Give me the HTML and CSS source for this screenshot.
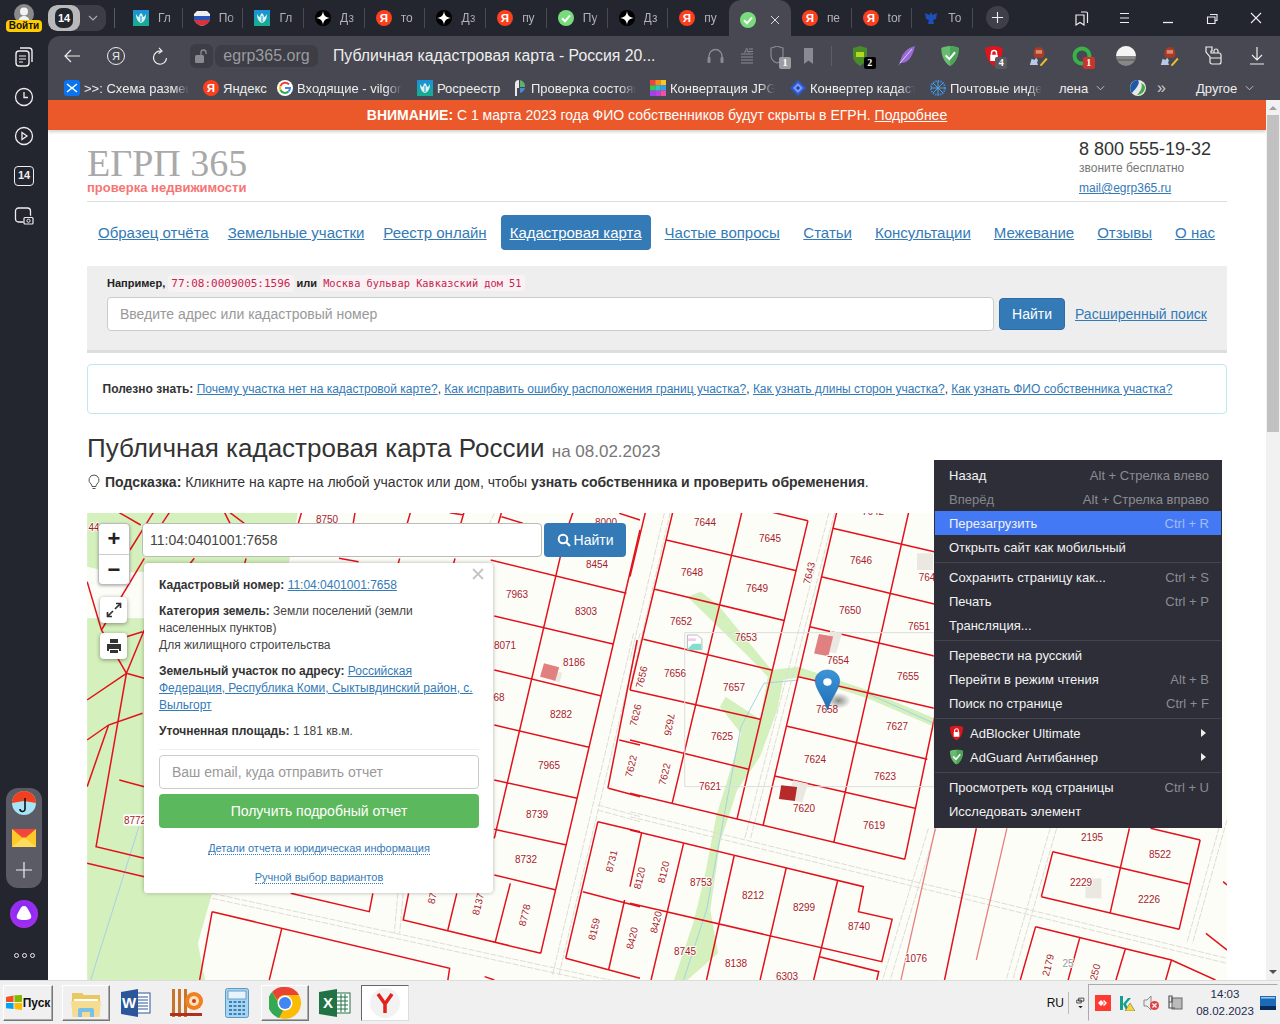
FILE: index.html
```html
<!DOCTYPE html>
<html lang="ru">
<head>
<meta charset="utf-8">
<title>Публичная кадастровая карта - Россия</title>
<link rel="stylesheet" href="styles.css">
</head>
<body>
<svg class="defs" width="0" height="0" aria-hidden="true">
  <defs>
    <linearGradient id="rosgrad" x1="0" y1="0" x2="0" y2="1"><stop offset="0" stop-color="#1d8fe0"/><stop offset="1" stop-color="#16b08a"/></linearGradient>
    <radialGradient id="alice" cx=".5" cy=".4" r=".7"><stop offset="0" stop-color="#7b2cf5"/><stop offset="1" stop-color="#b02cf0"/></radialGradient>
    <linearGradient id="pin" x1="0" y1="0" x2="0" y2="1"><stop offset="0" stop-color="#3d94d9"/><stop offset="1" stop-color="#1f6fb4"/></linearGradient>
    <radialGradient id="pinshadow"><stop offset="0" stop-color="#000" stop-opacity=".45"/><stop offset="1" stop-color="#000" stop-opacity="0"/></radialGradient>
    <symbol id="i-ros" viewBox="0 0 16 16"><rect width="16" height="16" fill="url(#rosgrad)"/><path d="M3 4c0 5 2 8 5 9 3-1 5-4 5-9-1 2-2 3-3 3 0-2-1-3-2-4-1 1-2 2-2 4-1 0-2-1-3-3z" fill="#d8f4f0"/><path d="M8 6v6" stroke="#1d8fe0" stroke-width="1"/></symbol>
    <symbol id="i-ya" viewBox="0 0 16 16"><circle cx="8" cy="8" r="8" fill="#fc3f1d"/><text x="8" y="12.4" text-anchor="middle" class="ya-letter">Я</text></symbol>
    <symbol id="i-dz" viewBox="0 0 16 16"><circle cx="8" cy="8" r="8" fill="#000"/><path d="M8 .8C8.400 5.500 10.500 7.600 15.200 8 10.500 8.400 8.400 10.500 8 15.200 7.600 10.500 5.500 8.400.8 8 5.500 7.600 7.600 5.500 8 .8z" fill="#fff"/></symbol>
    <symbol id="i-ok" viewBox="0 0 16 16"><circle cx="8" cy="8" r="8" fill="#79dc7c"/><path d="M4 8.300l3 3 5-6" fill="none" stroke="#fff" stroke-width="2"/></symbol>
    <symbol id="i-ru" viewBox="0 0 16 16"><path d="M3 1h10l3 3v4c0 4-4 7-8 8-4-1-8-4-8-8V4z" fill="#eee"/><path d="M0 6h16v4H0z" fill="#2a56b8"/><path d="M0 10h16c-1 3-4 5-8 6-4-1-7-3-8-6z" fill="#d8323c"/></symbol>
    <symbol id="i-eagle" viewBox="0 0 16 16"><path d="M8 2l1.500 3L14 3l-1 6-3 1 1 4H5l1-4-3-1-1-6 4.500 2z" fill="#1d4fb8"/></symbol>
    <symbol id="i-adg" viewBox="0 0 16 16"><path d="M8 0c3 0 5.500.8 7 1.600C15 8 12.500 13.500 8 16 3.500 13.500 1 8 1 1.600 2.500.8 5 0 8 0z" fill="#68bc71"/><path d="M8 0c3 0 5.500.8 7 1.600C15 8 12.500 13.500 8 16z" fill="#4da458"/><path d="M4.500 7.500l3 3 4.500-5.500" fill="none" stroke="#fff" stroke-width="1.600"/></symbol>
    <symbol id="i-adb" viewBox="0 0 16 16"><path d="M8 0c2.500 0 5 .8 7 1.800C15 8 12.500 13.500 8 16 3.500 13.500 1 8 1 1.800 3 .8 5.500 0 8 0z" fill="#e0141c"/><rect x="5" y="7" width="6" height="5" fill="#fff"/><path d="M6 7V5.500a2 2 0 0 1 4 0V7" fill="none" stroke="#fff" stroke-width="1.200"/></symbol>
    <symbol id="i-hat" viewBox="0 0 22 22"><path d="M6 9c0-5 2-8 6-8s6 3 6 8c0 2-1 3-2 4H8c-1-1-2-2-2-4z" fill="#a83a28"/><rect x="8.500" y="4.500" width="7" height="4" fill="#d98a70"/><path d="M2 21l2-7 3 1.500L9 13l2 3-1 2 1 3z" fill="#b8c8e8"/><path d="M13 21l7-8 1.500 1.500-7 8z" fill="#e8c030"/></symbol>
  </defs>
</svg>

<div class="screen">
  <header class="tabbar">
    <div class="account">
      <svg class="avatar" viewBox="0 0 20 20"><circle cx="10" cy="10" r="10" fill="#8a8a8a"/><circle cx="10" cy="7.500" r="4" fill="#f2f2f2"/><path d="M4 20c0-6 3-8 6-8s6 2 6 8z" fill="#f2f2f2"/></svg>
      <span class="login">Войти</span>
    </div>
    <div class="counter">
      <span class="counter-num"><span class="shield-num">14</span></span>
      <span class="counter-arrow"><svg width="10" height="6" viewBox="0 0 10 6"><path d="M1 1l4 4 4-4" fill="none" stroke="#aaa" stroke-width="1.200"/></svg></span>
    </div>
    <div class="tabs">
      <div class="tab"><svg class="ticon"><use href="#i-ros"/></svg><span class="tlabel">Гл</span></div>
      <div class="tab"><svg class="ticon"><use href="#i-ru"/></svg><span class="tlabel">По</span></div>
      <div class="tab"><svg class="ticon"><use href="#i-ros"/></svg><span class="tlabel">Гл</span></div>
      <div class="tab"><svg class="ticon"><use href="#i-dz"/></svg><span class="tlabel">Дз</span></div>
      <div class="tab"><svg class="ticon"><use href="#i-ya"/></svg><span class="tlabel">то</span></div>
      <div class="tab"><svg class="ticon"><use href="#i-dz"/></svg><span class="tlabel">Дз</span></div>
      <div class="tab"><svg class="ticon"><use href="#i-ya"/></svg><span class="tlabel">пу</span></div>
      <div class="tab"><svg class="ticon"><use href="#i-ok"/></svg><span class="tlabel">Пу</span></div>
      <div class="tab"><svg class="ticon"><use href="#i-dz"/></svg><span class="tlabel">Дз</span></div>
      <div class="tab tab-last"><svg class="ticon"><use href="#i-ya"/></svg><span class="tlabel">пу</span></div>
      <div class="tab tab-active"><svg class="ticon"><use href="#i-ok"/></svg><svg class="tclose" viewBox="0 0 10 10"><path d="M1 1l8 8M9 1l-8 8" stroke="#ddd" stroke-width="1"/></svg></div>
      <div class="tab tab-after"><svg class="ticon"><use href="#i-ya"/></svg><span class="tlabel">пе</span></div>
      <div class="tab"><svg class="ticon"><use href="#i-ya"/></svg><span class="tlabel">tor</span></div>
      <div class="tab"><svg class="ticon"><use href="#i-eagle"/></svg><span class="tlabel">То</span></div>
    </div>
    <div class="newtab"><svg width="13" height="13" viewBox="0 0 14 14"><path d="M7 1v12M1 7h12" stroke="#eee" stroke-width="1.200"/></svg></div>
    <div class="winctl">
      <svg class="wslot" viewBox="0 0 44 36"><path d="M23 12h5a1.500 1.500 0 0 1 1.500 1.500V23M18 15h8v10l-4-2.500-4 2.500z" fill="none" stroke="#eee" stroke-width="1.200"/></svg>
      <svg class="wslot" viewBox="0 0 44 36"><path d="M18 13.500h9M18 18h9M18 22.500h9" stroke="#eee" stroke-width="1.100"/></svg>
      <svg class="wslot" viewBox="0 0 44 36"><path d="M17 22.500h10" stroke="#eee" stroke-width="1.300"/></svg>
      <svg class="wslot" viewBox="0 0 44 36"><path d="M20 14.500h7v6h-2M17.500 17h7.500v6.500h-7.500z" fill="none" stroke="#eee" stroke-width="1.100"/></svg>
      <svg class="wslot" viewBox="0 0 44 36"><path d="M17 13l10 10M27 13l-10 10" stroke="#eee" stroke-width="1.100"/></svg>
    </div>
  </header>

  <div class="main">
    <aside class="sidebar">
      <div class="side-top">
        <svg class="side-icon" viewBox="0 0 20 20"><path d="M6 1h9a3 3 0 0 1 3 3v11" fill="none" stroke="#eee" stroke-width="1.400"/><rect x="2" y="4" width="13" height="15" rx="3" fill="none" stroke="#eee" stroke-width="1.400"/><path d="M5 9h7M5 12h7M5 15h4" stroke="#eee"/></svg>
        <svg class="side-icon" viewBox="0 0 20 20"><circle cx="10" cy="10" r="8.500" fill="none" stroke="#eee" stroke-width="1.300"/><path d="M10 5v5.500h4" fill="none" stroke="#eee" stroke-width="1.300"/></svg>
        <svg class="side-icon" viewBox="0 0 20 20"><circle cx="10" cy="10" r="8.500" fill="none" stroke="#eee" stroke-width="1.300"/><path d="M8 6.500l5 3.500-5 3.500z" fill="none" stroke="#eee" stroke-width="1.300"/></svg>
        <span class="side-count">14</span>
        <svg class="side-icon" viewBox="0 0 20 20"><rect x="1.500" y="2" width="15" height="14" rx="3" fill="none" stroke="#eee" stroke-width="1.300"/><circle cx="14" cy="14" r="5" fill="#23252f"/><rect x="10" y="11.500" width="9" height="6.500" rx="1" fill="none" stroke="#eee" stroke-width="1.200"/><circle cx="14.500" cy="14.700" r="1.600" fill="none" stroke="#eee"/></svg>
      </div>
      <div class="side-bottom">
        <div class="side-group">
          <svg class="app-icon" viewBox="0 0 24 24"><circle cx="12" cy="12" r="12" fill="#a8e4f8"/><path d="M0 12A12 12 0 0 1 24 12L12 10z" fill="#f2401e"/><path d="M13 7v11a2.500 2.500 0 0 1-5 0" fill="none" stroke="#111" stroke-width="1.600"/></svg>
          <svg class="app-icon" viewBox="0 0 24 18"><rect width="24" height="18" fill="#ffc928"/><path d="M0 0h24L12 10z" fill="#f4453a"/><path d="M0 18l12-10 12 10z" fill="#ffdb5a"/></svg>
          <svg class="app-plus" viewBox="0 0 16 16"><path d="M8 0v16M0 8h16" stroke="#eee" stroke-width="1.200"/></svg>
        </div>
        <svg class="alice" viewBox="0 0 28 28"><circle cx="14" cy="14" r="14" fill="url(#alice)"/><path d="M14 6c2.500 0 3.500 2 5 5 1.500 3 3 5 2 7-1 1.500-4 2-7 2s-6-.5-7-2c-1-2 .5-4 2-7 1.500-3 2.500-5 5-5z" fill="#fff"/></svg>
        <div class="dots"><i></i><i></i><i></i></div>
      </div>
    </aside>

    <div class="browser">
      <div class="toolbar">
        <div class="nav-slot"><svg width="16" height="14" viewBox="0 0 16 14"><path d="M7 1L1 7l6 6M1 7h15" fill="none" stroke="#eee" stroke-width="1.200"/></svg></div>
        <div class="nav-slot"><span class="ya-round">Я</span></div>
        <div class="nav-slot"><svg width="16" height="18" viewBox="0 0 16 18"><path d="M9 4.300A6.500 6.500 0 1 0 14.500 11M7 .8l3 3.400-3.500 2.400" fill="none" stroke="#eee" stroke-width="1.200"/></svg></div>
        <div class="lock"><svg width="13" height="14" viewBox="0 0 13 14"><rect y="6" width="9" height="8" rx="1.500" fill="#8a8b92"/><path d="M6 6V3.500a2.500 2.500 0 0 1 5 0V5" fill="none" stroke="#8a8b92" stroke-width="1.300"/></svg></div>
        <span class="host">egrp365.org</span>
        <span class="page-title">Публичная кадастровая карта - Россия 20...</span>
        <div class="tool-small">
          <svg class="tslot" viewBox="0 0 31 20"><path d="M9 15V10a6.500 6.500 0 0 1 13 0v5" fill="none" stroke="#8a8b92" stroke-width="1.400"/><rect x="7.500" y="11" width="3" height="6" rx="1" fill="#8a8b92"/><rect x="20.500" y="11" width="3" height="6" rx="1" fill="#8a8b92"/></svg>
          <svg class="tslot" viewBox="0 0 31 20"><path d="M10 8h12M10 11h12M10 14h12M10 17h12" stroke="#8a8b92"/><text x="13" y="6.500" class="tool-letter">А</text><path d="M18 3h4M18 5.500h4" stroke="#8a8b92"/></svg>
          <div class="tslot-box"><svg class="tslot" viewBox="0 0 31 20"><path d="M15 0c2 1 4 1.500 6 2v7c0 4-3 7-6 8-3-1-6-4-6-8V2c2-.5 4-1 6-2z" fill="none" stroke="#8a8b92" stroke-width="1.200"/></svg><span class="tbadge tbadge-grey">1</span></div>
          <svg class="tslot" viewBox="0 0 31 20"><path d="M11 2h9v16l-4.500-3.500L11 18z" fill="#8a8b92"/></svg>
        </div>
        <span class="tool-sep"></span>
        <div class="ext">
          <div class="eslot"><svg class="eicon eicon-left" viewBox="0 0 20 20"><path d="M3 2l7-2 7 2v8c0 5-4 8-7 10-3-2-7-5-7-10z" fill="#4a8a28"/><path d="M6 6h8v5H6z" fill="#b4d820"/></svg><span class="tbadge tbadge-black">2</span></div>
          <div class="eslot"><svg class="eicon" viewBox="0 0 20 20"><path d="M18 0C10 2 5 7 3 16l-2 4 3-3c6 0 11-4 14-17z" fill="#9a6ad8"/><path d="M15 3L3 17" stroke="#e0d0f8"/></svg></div>
          <div class="eslot"><svg class="eicon" viewBox="0 0 16 16"><use href="#i-adg"/></svg></div>
          <div class="eslot"><svg class="eicon" viewBox="0 0 16 16"><use href="#i-adb"/></svg><span class="tbadge tbadge-dim">4</span></div>
          <div class="eslot"><svg class="eicon" viewBox="0 0 22 22"><use href="#i-hat"/></svg></div>
          <div class="eslot"><svg class="eicon" viewBox="0 0 20 20"><circle cx="10" cy="10" r="7.500" fill="none" stroke="#37b34a" stroke-width="4"/></svg><span class="tbadge tbadge-red">1</span></div>
          <div class="eslot"><svg class="eicon" viewBox="0 0 20 20"><circle cx="10" cy="10" r="10" fill="#888"/><path d="M0 10A10 10 0 0 1 20 10z" fill="#f4f4f4"/><path d="M1 14h18" stroke="#666" stroke-width="1.500"/></svg></div>
          <div class="eslot"><svg class="eicon" viewBox="0 0 22 22"><use href="#i-hat"/></svg></div>
          <div class="eslot"><svg class="eicon" viewBox="0 0 20 20"><path d="M3 1h6v4H8v2h8a2 2 0 0 1 2 2v7a2 2 0 0 1-2 2H9a2 2 0 0 1-2-2V11L3 6zM11 7V5a2 2 0 0 1 4 0v2M7 12h11" fill="none" stroke="#eee" stroke-width="1.200"/></svg></div>
          <div class="eslot"><svg class="eicon" viewBox="0 0 20 20"><path d="M10 1v13M5 9l5 5 5-5M3 18h14" fill="none" stroke="#eee" stroke-width="1.200"/></svg></div>
        </div>
      </div>

      <div class="bookmarks">
        <a class="bm bm-w139"><svg class="bicon" viewBox="0 0 16 16"><rect width="16" height="16" rx="3" fill="#0a74f0"/><path d="M3 4l5 4 5-4M3 12l5-4 5 4" fill="none" stroke="#fff" stroke-width="1.400"/></svg><span class="bfade">&gt;&gt;: Схема размещ</span></a>
        <a class="bm bm-w74"><svg class="bicon"><use href="#i-ya"/></svg><span>Яндекс</span></a>
        <a class="bm bm-w140"><svg class="bicon" viewBox="0 0 16 16"><circle cx="8" cy="8" r="8" fill="#fff"/><path d="M12 4.500A5 5 0 0 0 3.500 6" fill="none" stroke="#ea4335" stroke-width="2"/><path d="M3.500 6a5 5 0 0 0 0 4" fill="none" stroke="#fbbc05" stroke-width="2"/><path d="M3.500 10a5 5 0 0 0 8 1.500" fill="none" stroke="#34a853" stroke-width="2"/><path d="M8 8h5a5 5 0 0 1-1.500 3.500" fill="none" stroke="#4285f4" stroke-width="2"/></svg><span class="bfade">Входящие - vilgort</span></a>
        <a class="bm bm-w94"><svg class="bicon"><use href="#i-ros"/></svg><span>Росреестр</span></a>
        <a class="bm bm-w139"><svg class="bicon" viewBox="0 0 16 16"><path d="M9 0a7 7 0 0 1 5 7H9z" fill="#5ab56a"/><path d="M8 0v8H6v8H4V4a4 4 0 0 1 4-4z" fill="#e8e8e8"/><path d="M9 8h5a7 7 0 0 1-5 5z" fill="#4a88d8"/></svg><span class="bfade">Проверка состоян</span></a>
        <a class="bm bm-w140"><svg class="bicon" viewBox="0 0 16 16"><rect width="5.400" height="5.400" fill="#f04040"/><rect x="5.300" width="5.400" height="5.400" fill="#f88a20"/><rect x="10.600" width="5.400" height="5.400" fill="#f8c820"/><rect y="5.300" width="5.400" height="5.400" fill="#30c850"/><rect x="5.300" y="5.300" width="5.400" height="5.400" fill="#28c8c0"/><rect x="10.600" y="5.300" width="5.400" height="5.400" fill="#30a0f0"/><rect y="10.600" width="5.400" height="5.400" fill="#a040f0"/><rect x="5.300" y="10.600" width="5.400" height="5.400" fill="#c040e0"/><rect x="10.600" y="10.600" width="5.400" height="5.400" fill="#f050a0"/></svg><span class="bfade">Конвертация JPG </span></a>
        <a class="bm bm-w140"><svg class="bicon" viewBox="0 0 16 16"><path d="M8 0l8 8-8 8-8-8z" fill="#2a58d8"/><path d="M8 3l5 5-5 5-5-5z" fill="#7898f0"/><path d="M8 6l2 2-2 2-2-2z" fill="#1a3aa8"/></svg><span class="bfade">Конвертер кадаст</span></a>
        <a class="bm bm-w129"><svg class="bicon" viewBox="0 0 16 16"><circle cx="8" cy="8" r="7" fill="none" stroke="#3a88d8" stroke-width="2" stroke-dasharray="1.500 1"/><path d="M8 1v14M1 8h14M3 3l10 10M13 3L3 13" stroke="#50a0e8"/></svg><span class="bfade bfade-short">Почтовые инде</span></a>
        <a class="bm-folder">лена<svg class="chev" viewBox="0 0 10 6"><path d="M1 1l4 4 4-4" fill="none" stroke="#ccc"/></svg></a>
        <svg class="bicon bm-globe" viewBox="0 0 16 16"><circle cx="8" cy="8" r="8" fill="#e8e8e8"/><path d="M8 0a8 8 0 0 0-6 13c2-3 4-4 6-8 1-2 1-4 0-5z" fill="#1a5aa8"/><path d="M11 3c2 3 0 8-4 12a8 8 0 0 0 8-7c0-2-1-4-4-5z" fill="#48a848"/></svg>
        <span class="bm-more">»</span>
        <a class="bm-other">Другое<svg class="chev" viewBox="0 0 10 6"><path d="M1 1l4 4 4-4" fill="none" stroke="#ccc"/></svg></a>
      </div>

      <div class="viewport">
        <div class="page">
          <div class="banner"><b>ВНИМАНИЕ:</b> С 1 марта 2023 года ФИО собственников будут скрыты в ЕГРН. <a>Подробнее</a></div>
          <div class="container">
            <div class="site-head">
              <div class="logo">
                <div class="logo-main">ЕГРП 365</div>
                <div class="logo-sub">проверка недвижимости</div>
              </div>
              <div class="contacts">
                <div class="phone">8 800 555-19-32</div>
                <div class="free">звоните бесплатно</div>
                <a class="mail">mail@egrp365.ru</a>
              </div>
            </div>
            <nav class="site-nav">
              <a class="nl">Образец отчёта</a>
              <a class="nl">Земельные участки</a>
              <a class="nl">Реестр онлайн</a>
              <a class="nl nl-active">Кадастровая карта</a>
              <a class="nl">Частые вопросы</a>
              <a class="nl nl-wide">Статьи</a>
              <a class="nl nl-wide">Консультации</a>
              <a class="nl nl-wide">Межевание</a>
              <a class="nl nl-wide">Отзывы</a>
              <a class="nl nl-wide">О нас</a>
            </nav>
            <div class="well">
              <div class="example"><b>Например,</b> <code>77:08:0009005:1596</code> <b>или</b> <code class="code-sm">Москва бульвар Кавказский дом 51</code></div>
              <div class="search-row">
                <div class="field">Введите адрес или кадастровый номер</div>
                <span class="btn-find">Найти</span>
                <a class="adv">Расширенный поиск</a>
              </div>
            </div>
            <div class="info"><b>Полезно знать:</b> <a>Почему участка нет на кадастровой карте?</a>, <a>Как исправить ошибку расположения границ участка?</a>, <a>Как узнать длины сторон участка?</a>, <a>Как узнать ФИО собственника участка?</a></div>
            <h1 class="heading">Публичная кадастровая карта России <small>на 08.02.2023</small></h1>
            <p class="tip"><svg class="bulb" viewBox="0 0 12 16"><path d="M6 1a5 5 0 0 0-3 9c.7.7 1 1.500 1 2.500h4c0-1 .3-1.800 1-2.500A5 5 0 0 0 6 1z" fill="none" stroke="#555"/><path d="M4.500 14.500h3" stroke="#555"/></svg><b>Подсказка:</b> Кликните на карте на любой участок или дом, чтобы <b>узнать собственника и проверить обременения</b>.</p>

            <div class="map">
              <svg class="map-svg" viewBox="87 513 1140 467" width="1140" height="467">
                <rect x="87" y="513" width="1140" height="467" fill="#fdfdf8"/>
                <g transform="translate(80 510) scale(.35714 .33333)">
                  <path class="green" d="M20 8H610L585 160 100 190 20 170ZM20 325H180V1150H370L330 1300 350 1410H20Z"/>
                  <path class="water" d="M165 950L30 1410"/>
                  <path class="road" d="M1568 370L1340 1400M1550 370L1322 1400M370 1150L1568 1430M370 1165L1568 1445M1450 885L1568 920M1450 900L1568 935M890 1150L880 1270M905 1150L895 1270M1160 10L1145 45"/>
                  <path class="parcel" d="M110 8L170 45M205 8L140 120M250 8L230 40M405 8L420 40M420 8L460 40M60 360L180 145M20 215L60 360 130 490M130 490L20 570M130 490L180 505M180 360L130 490 45 1010 180 1045M175 610L80 645 20 830M80 645L20 690M110 810L180 830M20 1060L180 1100M130 380L175 365M320 145L305 165M465 145L460 165M725 145L780 155M895 145L890 165M1050 145L1045 165M620 8L610 45M770 8L765 40M925 8L915 45M1075 8L1065 45M1180 8L1170 45M1180 20L1240 40M1035 8L1075 15M1380 8L1368 45M1345 140L1160 985M1150 150L1530 250M1160 318L1495 403M1160 480L1460 558M1160 645L1425 712M1160 810L1392 865M1160 958L1362 1005M1160 1095L1333 1140M1568 60L1290 1330M1510 10L1568 30M1510 690L1568 705M1480 835L1568 860M1560 390L1478 835M1450 935L1568 965M1450 935L1360 1345M1408 1145L1568 1190M1360 1345L1568 1405M1525 1170L1480 1380M370 1205L1035 1375 1030 1410M370 1205L335 1410M565 1255L530 1410M590 1150L810 1205 820 1150M920 1150L905 1230 1290 1330M1055 1150L1030 1260M1205 1120L1163 1295M1133 1400L1160 1410"/>
                  <rect class="house" x="1325" y="485" width="22" height="30" transform="rotate(15 1336 500)"/>
                  <rect class="bld" x="1293" y="465" width="44" height="42" transform="rotate(15 1315 486)"/>
                  <rect x="122" y="913" width="58" height="34" fill="#fff"/>
                </g>
                <g transform="translate(630 510) scale(.38265 .33333)">
                  <path class="green" d="M150 260L185 245 230 285 370 480 440 470 620 540 795 625V650L620 565 450 500 400 510 385 600 340 740 280 840 235 1000 210 1200 230 1330 150 1410H115L165 1240 195 1100 225 920 265 770 290 670 235 590 250 560 340 628 360 500 310 440Z"/>
                  <path class="water" d="M440 510L350 520 290 650 265 800 200 1200 140 1410M620 550L795 640"/>
                  <path class="road" d="M535 8L315 985M520 8L300 985M105 8L0 530M90 8L0 450M0 905L1560 1345M0 920L1560 1360M800 955L680 1410M780 955L660 1410M1115 955L1000 1410M1098 955L983 1410M1560 930L1470 1300M1545 930L1455 1300"/>
                  <path class="parcel" d="M40 8L0 200M112 5L0 540M292 8L110 880M465 32L280 925M540 8L348 945M728 8L533 995M800 600L718 1048M365 5L465 32M95 90L435 182M65 238L405 332M35 388L370 480M0 540L340 628M0 690L310 778M0 850L718 1048M530 55L795 125M500 200L795 282M470 350L795 438M440 500L795 595M408 648L777 748M378 798L745 895M0 960L610 1130 597 1205 685 1228 658 1355 0 1180M30 970L0 1130M140 1000L55 1410M272 1038L200 1410M408 1075L340 1410M543 1110L480 1410M495 1340L650 1385 645 1410M905 955L822 1410M1105 1025L1460 1122M1075 1160L1435 1258M1105 1025L1075 1160M1305 955L1255 1208M1490 990L1435 1258M1360 955L1490 990M1060 1250L1415 1350 1530 1410M1060 1250L1020 1410M1175 1285L1145 1410M1295 1315L1270 1410M1415 1350L1400 1410M1505 1270L1560 1320M1560 1125L1550 1115"/>
                  <path class="parcel-light" d="M798 955L708 1410M985 955L905 1350"/>
                  <rect class="frame" x="143" y="368" width="652" height="462"/>
                  <path class="broken" d="M150 375h26l12 12v32h-38z"/><path d="M152 415l12-14 22 0v18h-34z" fill="#7fe0d0"/><path d="M152 385h20v8h-20z" fill="#f4c8e8"/>
                  <rect class="house" x="515" y="365" width="32" height="62" transform="rotate(15 530 395)"/>
                  <rect class="bld" x="487" y="375" width="38" height="60" transform="rotate(12 505 405)"/>
                  <rect class="house" x="418" y="815" width="40" height="58" transform="rotate(15 438 845)"/>
                  <rect class="bld-dark" x="392" y="828" width="42" height="42" transform="rotate(8 412 849)"/>
                  <rect class="house" x="1190" y="1105" width="42" height="60"/>
                  <rect class="house" x="750" y="130" width="42" height="50"/>
                </g>
                <g class="lbl">
                  <text x="873" y="515">7642</text><text x="705" y="526">7644</text><text x="770" y="542">7645</text><text x="861" y="564">7646</text><text x="692" y="576">7648</text><text x="757" y="592">7649</text><text x="927" y="581">764</text><text x="850" y="614">7650</text><text x="919" y="630">7651</text><text x="681" y="625">7652</text><text x="746" y="641">7653</text><text x="838" y="664">7654</text><text x="908" y="680">7655</text><text x="675" y="677">7656</text><text x="734" y="691">7657</text><text x="827" y="713">7658</text><text x="897" y="730">7627</text><text x="722" y="740">7625</text><text x="815" y="763">7624</text><text x="885" y="780">7623</text><text x="710" y="790">7621</text><text x="804" y="812">7620</text><text x="874" y="829">7619</text><text x="1092" y="841">2195</text><text x="1160" y="858">8522</text><text x="1081" y="886">2229</text><text x="1149" y="903">2226</text><text x="701" y="886">8753</text><text x="753" y="899">8212</text><text x="804" y="911">8299</text><text x="859" y="930">8740</text><text x="685" y="955">8745</text><text x="736" y="967">8138</text><text x="787" y="980">6303</text><text x="916" y="962">1076</text><text class="lbl-grey" x="1068" y="967">25</text>
                  <text x="327" y="523">8750</text><text x="597" y="568">8454</text><text x="517" y="598">7963</text><text x="586" y="615">8303</text><text x="505" y="649">8071</text><text x="574" y="666">8186</text><text x="499" y="701">68</text><text x="561" y="718">8282</text><text x="549" y="769">7965</text><text x="537" y="818">8739</text><text x="526" y="863">8732</text><text x="606" y="526">8000</text><text x="94" y="531">44</text><text x="135" y="824">8772</text>
                  <text transform="translate(812.500 574) rotate(-76)">7643</text><text transform="translate(645 678) rotate(-76)">7656</text><text transform="translate(639 716) rotate(-76)">7626</text><text transform="translate(666 724) rotate(100)">7626</text><text transform="translate(668 775) rotate(-76)">7622</text><text transform="translate(634.500 767) rotate(-76)">7622</text><text transform="translate(643 879) rotate(-76)">8120</text><text transform="translate(667 873) rotate(-76)">8120</text><text transform="translate(659.500 923) rotate(-76)">8420</text><text transform="translate(635.500 939) rotate(-76)">8420</text><text transform="translate(1051.500 966) rotate(-76)">2179</text><text transform="translate(1098.500 973) rotate(-76)">250</text><text transform="translate(615 862) rotate(-76)">8731</text><text transform="translate(528 916) rotate(-76)">8778</text><text transform="translate(481.500 905) rotate(-76)">8137</text><text transform="translate(435.500 899) rotate(-76)">87</text><text transform="translate(597.500 930) rotate(-76)">8159</text>
                </g>
                <g transform="translate(630 510) scale(.38265 .33333)">
                  <ellipse cx="545" cy="572" rx="32" ry="24" fill="url(#pinshadow)"/>
                  <path d="M516 480c-18 0-32 14-32 33 0 22 22 50 32 87 10-37 32-65 32-87 0-19-14-33-32-33z" fill="url(#pin)" stroke="#1d6aa8" stroke-width="1.500"/>
                  <circle cx="516" cy="516" r="11" fill="#fff"/>
                </g>
              </svg>

              <div class="map-zoom"><span class="mz mz-top">+</span><span class="mz">−</span></div>
              <div class="map-btn map-full"><svg width="18" height="18" viewBox="0 0 18 18"><path d="M10 8l5-5M11 2.500h4.500V7M8 10l-5 5M7 15.500H2.500V11" fill="none" stroke="#333" stroke-width="1.700"/></svg></div>
              <div class="map-btn map-print"><svg width="16" height="16" viewBox="0 0 16 16"><path d="M4 1h8v4H4zM1 6h14v7h-2v-2H3v2H1zM4 12h8v3H4z" fill="#333"/></svg></div>
              <div class="map-search">
                <div class="map-input">11:04:0401001:7658</div>
                <span class="map-go"><svg width="14" height="14" viewBox="0 0 14 14"><circle cx="6" cy="6" r="4.300" fill="none" stroke="#fff" stroke-width="2"/><path d="M9 9l4 4" stroke="#fff" stroke-width="2.200"/></svg>Найти</span>
              </div>
              <div class="popup">
                <svg class="popup-x" viewBox="0 0 12 12"><path d="M1 1l10 10M11 1L1 11" stroke="#c4c4c4" stroke-width="1.800"/></svg>
                <p><b>Кадастровый номер:</b> <a>11:04:0401001:7658</a></p>
                <p><b>Категория земель:</b> Земли поселений (земли<br>населенных пунктов)<br>Для жилищного строительства</p>
                <p><b>Земельный участок по адресу:</b> <a>Российская Федерация, Республика Коми, Сыктывдинский район, с. Выльгорт</a></p>
                <p><b>Уточненная площадь:</b> 1 181 кв.м.</p>
                <hr class="popup-hr">
                <div class="popup-input">Ваш email, куда отправить отчет</div>
                <div class="popup-btn">Получить подробный отчет</div>
                <div class="popup-link"><a>Детали отчета и юридическая информация</a></div>
                <div class="popup-link popup-link2"><a>Ручной выбор вариантов</a></div>
              </div>
            </div>
          </div>
        </div>
        <div class="scrollbar">
          <svg class="sb-arrow" viewBox="0 0 14 14"><path d="M3 9l4-4 4 4z" fill="#a0a0a0"/></svg>
          <div class="sb-thumb"></div>
          <svg class="sb-arrow sb-down" viewBox="0 0 14 14"><path d="M3 5l4 4 4-4z" fill="#505050"/></svg>
        </div>
      </div>
    </div>
  </div>

  <footer class="taskbar">
    <div class="tb-btn tb-start">
      <svg width="16" height="15" viewBox="0 0 17 16"><path d="M0 2l8-1.500V7.500H0z" fill="#f25022"/><path d="M9 .3L17 0v7.500H9z" fill="#7fba00"/><path d="M0 8.500h8V15l-8-1z" fill="#00a4ef"/><path d="M9 8.500h8V16l-8-1z" fill="#ffb900"/></svg>
      <span>Пуск</span>
    </div>
    <div class="tb-btn tb-app tb-first"><svg width="32" height="32" viewBox="0 0 32 32"><path d="M2 6h10l2 2h16v8H2z" fill="#e8c860"/><path d="M4 12h24v4H4z" fill="#fff"/><path d="M1 14h30l-1.500 16h-27z" fill="#f6dc90"/><path d="M8 30v-7a2 2 0 0 1 2-2h12a2 2 0 0 1 2 2v7h-4v-5h-8v5z" fill="#78c0e8"/></svg></div>
    <div class="tb-plain tb-w"><svg width="30" height="28" viewBox="0 0 30 28"><rect x="14" y="4" width="15" height="20" fill="#fff" stroke="#2b579a"/><path d="M17 8h10M17 11h10M17 14h10M17 17h10M17 20h10" stroke="#2b579a"/><path d="M0 3l17-3v28L0 25z" fill="#2b579a"/><text x="8" y="19" text-anchor="middle" class="tb-letter">W</text></svg></div>
    <div class="tb-plain tb-slide"><svg width="34" height="32" viewBox="0 0 34 32"><path d="M2 2h3v28H2zM8 2h3v28H8zM14 2h3v28h-3z" fill="#c8742a"/><path d="M0 26h32v3H0z" fill="#b03020"/><circle cx="24" cy="14" r="9" fill="#f08020"/><circle cx="24" cy="14" r="5" fill="#fde0c0"/><circle cx="24" cy="14" r="2" fill="#c84010"/></svg></div>
    <div class="tb-plain tb-calc"><svg width="24" height="30" viewBox="0 0 24 30"><rect x=".5" y=".5" width="23" height="29" rx="2" fill="#a8d4f0" stroke="#5a9ac8"/><rect x="3" y="3" width="18" height="8" fill="#e8f4fc" stroke="#6aa0c8"/><path d="M4 14h16M4 18h16M4 22h16M4 26h16" stroke="#3a80b8" stroke-width="2.200" stroke-dasharray="3 1.500"/></svg></div>
    <div class="tb-btn tb-app tb-chrome"><svg width="32" height="32" viewBox="0 0 32 32"><circle cx="16" cy="16" r="16" fill="#fbbc05"/><path d="M16 0a16 16 0 0 1 14 8H16a8 8 0 0 0-7.500 5L3 5a16 16 0 0 1 13-5z" fill="#ea4335"/><path d="M3 5l6 10a8 8 0 0 0 5 8.500L10 31A16 16 0 0 1 3 5z" fill="#34a853"/><circle cx="16" cy="16" r="7.500" fill="#fff"/><circle cx="16" cy="16" r="6" fill="#4285f4"/></svg></div>
    <div class="tb-plain tb-x"><svg width="32" height="28" viewBox="0 0 32 28"><rect x="15" y="4" width="16" height="20" fill="#fff" stroke="#217346"/><path d="M17 8h12M17 12h12M17 16h12M17 20h12M22 5v18M26 5v18" stroke="#217346"/><path d="M0 3l18-3v28L0 25z" fill="#217346"/><text x="9" y="19" text-anchor="middle" class="tb-letter">X</text></svg></div>
    <div class="tb-pressed"><svg width="30" height="30" viewBox="0 0 30 30"><circle cx="15" cy="15" r="15" fill="#f2f2f2"/><path d="M8 6l7 10 7-10M15 16v9" fill="none" stroke="#e2201c" stroke-width="3.500"/></svg></div>
    <div class="tray-left">
      <span class="lang">RU</span>
      <span class="tray-sep"></span>
      <div class="tray-btn"><svg width="9" height="14" viewBox="0 0 12 16"><path d="M3.500 1.500h7v4h-7zM1 4h6v4H1z" fill="#f0f0f0" stroke="#222"/><path d="M3 12h6l-3 3z" fill="#222"/></svg></div>
    </div>
    <div class="tray">
      <svg class="ti" viewBox="0 0 16 16"><rect width="16" height="16" fill="#ff3a30"/><path d="M3 8l3-3 3 3-3 3zM9 5l3 3-3 3-1-1 2-2-2-2z" fill="#fff"/></svg>
      <svg class="ti" viewBox="0 0 16 16"><path d="M1 1h3v14H1zM4 9l5-6h3L7 9l3 6H7z" fill="#14a08c"/><path d="M11 8l5 8H6z" fill="#f8d830" stroke="#555" stroke-width=".5"/></svg>
      <svg class="ti" viewBox="0 0 16 16"><path d="M1 5h3l4-4v14l-4-4H1z" fill="#eee" stroke="#888"/><circle cx="11.500" cy="10.500" r="4.500" fill="#e04040"/><path d="M9.500 8.500l4 4M13.500 8.500l-4 4" stroke="#fff" stroke-width="1.200"/></svg>
      <svg class="ti" viewBox="0 0 16 16"><rect x="5" y="3" width="10" height="11" fill="#bbb" stroke="#666"/><path d="M2 1h3v6H2zM2 7v6h6" fill="none" stroke="#555" stroke-width="1.200"/></svg>
      <div class="clock"><span>14:03</span><span>08.02.2023</span></div>
      <svg class="ti ti-desk" viewBox="0 0 16 14"><rect width="16" height="14" fill="#1a6ab8"/><rect y="10" width="16" height="4" fill="#0a2a58"/><rect x="1" y="1" width="14" height="1.500" fill="#9cc8ec"/></svg>
    </div>
  </footer>

  <div class="ctx">
    <div class="ci"><span>Назад</span><span class="ks">Alt + Стрелка влево</span></div>
    <div class="ci ci-off"><span>Вперёд</span><span class="ks">Alt + Стрелка вправо</span></div>
    <div class="ci ci-on"><span>Перезагрузить</span><span class="ks">Ctrl + R</span></div>
    <div class="ci"><span>Открыть сайт как мобильный</span></div>
    <div class="csep"></div>
    <div class="ci"><span>Сохранить страницу как...</span><span class="ks">Ctrl + S</span></div>
    <div class="ci"><span>Печать</span><span class="ks">Ctrl + P</span></div>
    <div class="ci"><span>Трансляция...</span></div>
    <div class="csep"></div>
    <div class="ci"><span>Перевести на русский</span></div>
    <div class="ci"><span>Перейти в режим чтения</span><span class="ks">Alt + B</span></div>
    <div class="ci"><span>Поиск по странице</span><span class="ks">Ctrl + F</span></div>
    <div class="csep"></div>
    <div class="ci ci-ext"><svg class="ci-icon" viewBox="0 0 16 16"><use href="#i-adb"/></svg><span>AdBlocker Ultimate</span><span class="ci-arrow"></span></div>
    <div class="ci ci-ext"><svg class="ci-icon" viewBox="0 0 16 16"><use href="#i-adg"/></svg><span>AdGuard Антибаннер</span><span class="ci-arrow"></span></div>
    <div class="csep"></div>
    <div class="ci"><span>Просмотреть код страницы</span><span class="ks">Ctrl + U</span></div>
    <div class="ci"><span>Исследовать элемент</span></div>
  </div>
</div>
</body>
</html>
```

FILE: styles.css
```css
* { box-sizing: border-box; }
html, body { margin: 0; padding: 0; }
body { width: 1280px; height: 1024px; overflow: hidden; background: #23252f; font-family: "Liberation Sans", Arial, sans-serif; color: #333; }
.defs { position: absolute; }
a { cursor: pointer; }
svg { display: block; flex: none; }
.ya-letter { font: 700 11.500px "Liberation Sans", sans-serif; fill: #fff; }

.screen { position: relative; width: 1280px; height: 1024px; display: flex; flex-direction: column; overflow: hidden; }

/* tab strip */
.tabbar { height: 36px; flex: none; display: flex; background: #23252f; }
.account { position: relative; width: 48px; flex: none; }
.avatar { position: absolute; left: 14px; top: 4px; width: 20px; height: 20px; }
.login { position: absolute; left: 6px; top: 20px; width: 36px; height: 12px; border-radius: 4px; background: #ffcc00; color: #111; font: 700 10px/12px "Liberation Sans", sans-serif; text-align: center; }
.counter { width: 58px; height: 26px; margin-top: 5px; border-radius: 9px; background: #3c3d46; display: flex; overflow: hidden; flex: none; }
.counter-num { width: 32px; background: #b9b9bb; border-radius: 9px; display: flex; align-items: center; justify-content: center; }
.shield-num { width: 18px; height: 20px; background: #24262e; border-radius: 7px; color: #fff; font: 700 11px/20px "Liberation Sans", sans-serif; text-align: center; }
.counter-arrow { flex: 1; display: flex; align-items: center; justify-content: center; }
.tabs { display: flex; margin: 8px 0 0 8px; padding-left: 7px; flex: none; border-left: 1px solid #5a5b62; height: 20px; }
.tab { width: 60.700px; height: 20px; display: flex; align-items: center; padding-left: 11px; border-right: 1px solid #4a4b52; flex: none; position: relative; }
.tab-last { border-right: 0; }
.tab-active { height: 36px; margin-top: -8px; width: 62px; background: #474851; border: 0; border-radius: 12px 12px 0 0; padding: 4px 0 0 11px; }
.ticon { width: 16px; height: 16px; }
.tlabel { margin-left: 9px; width: 18px; overflow: hidden; white-space: nowrap; color: #b2b2b6; font-size: 12px; -webkit-mask-image: linear-gradient(90deg, #000 65%, transparent); mask-image: linear-gradient(90deg, #000 65%, transparent); }
.tclose { width: 10px; height: 10px; margin-left: 14px; }
.newtab { width: 23px; height: 23px; margin: 6px 0 0 13px; border-radius: 50%; background: #3e3f48; display: flex; align-items: center; justify-content: center; flex: none; }
.winctl { margin-left: auto; display: flex; padding-right: 2px; }
.wslot { width: 44px; height: 36px; }

/* main */
.main { flex: 1; display: flex; min-height: 0; }
.sidebar { width: 48px; flex: none; display: flex; flex-direction: column; justify-content: space-between; align-items: center; padding: 11px 0 21px; background: #23252f; }
.side-top { display: flex; flex-direction: column; align-items: center; gap: 19.700px; }
.side-icon { width: 20px; height: 20px; }
.side-count { width: 20px; height: 20px; border: 1.500px solid #eee; border-radius: 4px; color: #eee; font: 700 11px/17px "Liberation Sans", sans-serif; text-align: center; }
.side-bottom { display: flex; flex-direction: column; align-items: center; }
.side-group { width: 36px; height: 100px; border-radius: 12px; background: #5a5b64; display: flex; flex-direction: column; align-items: center; padding-top: 3px; }
.app-icon { width: 24px; height: 24px; }
.app-icon + .app-icon { height: 18px; margin-top: 14px; }
.app-plus { width: 16px; height: 16px; margin-top: 15px; }
.alice { width: 28px; height: 28px; margin-top: 12px; }
.dots { display: flex; gap: 3px; margin-top: 25px; height: 6px; }
.dots i { width: 5px; height: 5px; border-radius: 50%; border: 1.500px solid #eee; }

.browser { flex: 1; min-width: 0; display: flex; flex-direction: column; background: #474851; border-radius: 12px 0 0 0; overflow: hidden; }
.toolbar { height: 40px; flex: none; display: flex; align-items: center; padding-left: 2px; }
.nav-slot { width: 44px; height: 36px; display: flex; align-items: center; justify-content: center; flex: none; }
.ya-round { width: 18px; height: 18px; border-radius: 50%; border: 1.200px solid #eee; color: #eee; font: 11px/16px "Liberation Sans", sans-serif; text-align: center; }
.tool-letter { font: 8px "Liberation Sans", sans-serif; fill: #8a8b92; }
.lock { width: 23px; height: 24px; margin-left: 8px; border-radius: 6px; background: #3c3d45; display: flex; align-items: center; justify-content: center; flex: none; }
.host { width: 103px; height: 22px; margin-left: 2px; border-radius: 7px; background: #3c3d45; color: #9a9ba1; font-size: 16px; line-height: 22px; text-align: center; flex: none; }
.page-title { width: 367px; margin-left: 15px; color: #eee; font-size: 15.800px; white-space: nowrap; overflow: hidden; flex: none; }
.tool-small { display: flex; flex: none; }
.tslot { width: 31px; height: 20px; }
.tslot-box { position: relative; width: 31px; height: 20px; }
.tool-sep { width: 1px; height: 20px; background: #5e5f66; margin: 0 9px 0 7px; flex: none; }
.ext { display: flex; flex: none; }
.eslot { position: relative; width: 43.800px; height: 22px; display: flex; align-items: center; justify-content: center; }
.eicon { width: 20px; height: 20px; }
.eicon-left { margin-right: 6px; }
.tbadge { position: absolute; right: 9px; bottom: -2px; min-width: 12px; height: 12px; font: 700 10px/12px "Liberation Serif", serif; color: #fff; text-align: center; border-radius: 2px; }
.tslot-box .tbadge { right: 2px; bottom: -3px; }
.tbadge-grey { background: #9b9ca1; }
.tbadge-black { background: #000; }
.tbadge-dim { background: #58595e; }
.tbadge-red { background: #c8352c; }

.bookmarks { height: 24px; flex: none; display: flex; align-items: center; padding-left: 16px; color: #eee; font-size: 13px; white-space: nowrap; }
.bm { display: flex; align-items: center; flex: none; overflow: hidden; }
.bm-w74 { width: 74px; } .bm-w94 { width: 94px; } .bm-w129 { width: 129px; } .bm-w139 { width: 139px; } .bm-w140 { width: 140px; }
.bicon { width: 16px; height: 16px; margin-right: 4px; flex: none; }
.bfade { width: 105px; overflow: hidden; -webkit-mask-image: linear-gradient(90deg, #000 85%, transparent); mask-image: linear-gradient(90deg, #000 85%, transparent); }
.bfade-short { width: 92px; }
.bm-folder { display: flex; align-items: center; width: 71px; flex: none; }
.chev { width: 9px; height: 6px; margin-left: 8px; }
.bm-globe { margin-right: 0; }
.bm-more { width: 50px; padding-left: 11px; font-size: 16px; flex: none; color: #ccc; }
.bm-other { display: flex; align-items: center; flex: none; }

.viewport { flex: 1; min-height: 0; display: flex; background: #fff; }
.page { width: 1218px; flex: none; overflow: hidden; background: #fff; }
.scrollbar { width: 14px; flex: none; background: #f1f1f1; display: flex; flex-direction: column; position: relative; }
.sb-arrow { width: 14px; height: 14px; margin-top: 1px; }
.sb-thumb { width: 12px; height: 317px; margin: 0 1px; background: #c1c1c1; }
.sb-down { margin-top: auto; margin-bottom: 1px; }

.banner { height: 30px; background: #eb582a; color: #fff; font-size: 14px; line-height: 30px; text-align: center; box-shadow: 0 2px 3px rgba(0,0,0,.18); position: relative; }
.banner a { text-decoration: underline; }
.container { width: 1140px; margin-left: 39px; }
.site-head { height: 72px; border-bottom: 1px solid #ddd; display: flex; justify-content: space-between; }
.logo { padding-top: 16px; }
.logo-main { font: 38px/35px "Liberation Serif", serif; color: #a9a9a9; white-space: nowrap; }
.logo-sub { font: 700 13px/14px "Liberation Sans", sans-serif; color: #f77474; }
.contacts { width: 148px; padding-top: 9px; }
.phone { font-size: 18px; line-height: 20px; color: #333; }
.free { font-size: 12px; line-height: 18px; color: #777; }
.mail { display: block; font-size: 12px; line-height: 22px; color: #337ab7; text-decoration: underline; }

.site-nav { display: flex; align-items: center; height: 35px; margin-top: 13px; padding-left: 1.500px; }
.nl { padding: 0 9.500px; font-size: 15px; color: #337ab7; text-decoration: underline; white-space: nowrap; }
.nl-active { padding: 0 9px; margin: 0 4.500px; height: 35px; line-height: 35px; background: #337ab7; color: #fff; border-radius: 4px; }
.nl-wide { padding: 0 11.500px; }
.nl-active + .nl { padding-right: 12px; }

.well { height: 87px; margin-top: 16px; background: #eee; border-bottom: 3px solid #ddd; padding: 10px 20px 0; }
.example { height: 21px; font-size: 11px; line-height: 15px; color: #222; white-space: nowrap; }
.example code { font: 11px/15px "DejaVu Sans Mono", monospace; color: #c7254e; background: #f9f2f4; padding: 2px 3px; border-radius: 3px; }
.example .code-sm { font-size: 10.300px; }
.search-row { display: flex; align-items: center; }
.field { width: 887px; height: 34px; background: #fff; border: 1px solid #ccc; border-radius: 4px; padding-left: 12px; font-size: 14px; line-height: 32px; color: #999; }
.btn-find { width: 66px; height: 32px; margin-left: 5px; background: #337ab7; border: 1px solid #2e6da4; border-radius: 4px; color: #fff; font-size: 14px; line-height: 30px; text-align: center; }
.adv { margin-left: 10px; font-size: 14px; color: #337ab7; text-decoration: underline; white-space: nowrap; }

.info { height: 50px; margin-top: 11px; padding: 16px 14.500px 0; border: 1px solid #bce8f1; border-radius: 4px; font-size: 12px; line-height: 17px; color: #333; white-space: nowrap; }
.info a { color: #337ab7; text-decoration: underline; }
.heading { margin: 19px 0 0; font-size: 26px; font-weight: 400; line-height: 30px; color: #333; white-space: nowrap; }
.heading small { font-size: 17px; color: #777; }
.tip { display: flex; align-items: center; margin: 5px 0 0; height: 20px; font-size: 14px; white-space: pre-wrap; }
.tip b { font-weight: 700; }
.bulb { width: 12px; height: 16px; margin: 0 5px 0 1px; }

/* map */
.map { position: relative; width: 1140px; height: 467px; margin-top: 21px; overflow: hidden; }
.map-svg { position: absolute; left: 0; top: 0; }
.green { fill: #d4f0bc; stroke: none; }
.water { fill: none; stroke: #a8d0e8; stroke-width: 1px; vector-effect: non-scaling-stroke; }
.road { fill: none; stroke: #dedcd4; stroke-width: 1px; stroke-dasharray: 6 1.500; vector-effect: non-scaling-stroke; }
.parcel { fill: none; stroke: #e2121c; stroke-width: 1.500px; vector-effect: non-scaling-stroke; }
.parcel-light { fill: none; stroke: #e88080; stroke-width: 1.300px; vector-effect: non-scaling-stroke; }
.frame { fill: none; stroke: #dcdcdc; stroke-width: 1px; vector-effect: non-scaling-stroke; }
.broken { fill: #fff; stroke: #bbb; stroke-width: 1px; vector-effect: non-scaling-stroke; }
.house { fill: #ebe8e2; }
.bld { fill: #e08080; }
.bld-dark { fill: #b62a2a; }
.lbl { font: 10px "Liberation Sans", sans-serif; fill: #a81c24; text-anchor: middle; paint-order: stroke; stroke: #fff; stroke-opacity: .85; stroke-width: 2px; }
.lbl-grey { fill: #999; }

.map-zoom { position: absolute; left: 11px; top: 10px; width: 32px; height: 62px; background: #fff; border: 1px solid #bbb; border-radius: 4px; box-shadow: 0 1px 3px rgba(0,0,0,.3); display: flex; flex-direction: column; }
.mz { flex: 1; text-align: center; font: 700 22px/29px "Liberation Sans", sans-serif; color: #222; }
.mz-top { border-bottom: 1px solid #ccc; }
.map-btn { position: absolute; left: 13px; width: 27px; height: 26px; background: #fff; border-radius: 4px; box-shadow: 0 1px 4px rgba(0,0,0,.4); display: flex; align-items: center; justify-content: center; }
.map-full { top: 84px; }
.map-print { top: 120px; }
.map-search { position: absolute; left: 55px; top: 10px; display: flex; gap: 2px; }
.map-input { width: 400px; height: 34px; background: #fff; border: 1px solid #bbb; border-radius: 4px; padding-left: 7px; font-size: 14px; line-height: 32px; color: #444; }
.map-go { width: 82px; height: 34px; background: #337ab7; border-radius: 4px; color: #fff; font-size: 14px; display: flex; align-items: center; justify-content: center; gap: 3px; }
.popup { position: absolute; left: 57px; top: 50px; width: 349px; height: 330px; padding: 14px 14px 0 15px; background: #fff; border-radius: 4px; box-shadow: 0 0 4px rgba(0,0,0,.3); font-size: 12px; line-height: 17px; color: #444; }
.popup p { margin: 0 0 9px; }
.popup b { color: #333; }
.popup a { color: #337ab7; text-decoration: underline; }
.popup-x { position: absolute; right: 9px; top: 5px; width: 12px; height: 12px; }
.popup-hr { height: 1px; margin: 9px 0 5px; border: 0; background: #eee; }
.popup-input { width: 320px; height: 34px; border: 1px solid #ccc; border-radius: 4px; padding-left: 12px; font-size: 14px; line-height: 32px; color: #999; }
.popup-btn { width: 320px; height: 34px; margin-top: 5px; background: #5cb85c; border-radius: 4px; color: #fff; font-size: 14px; line-height: 34px; text-align: center; }
.popup-link { margin-top: 12px; font-size: 11px; line-height: 17px; text-align: center; }
.popup .popup-link a { text-decoration: none; border-bottom: 1px dotted #337ab7; }

/* taskbar */
.taskbar { height: 44px; flex: none; display: flex; align-items: center; background: #f0f0f0; border-top: 1px solid #dcdcdc; padding-left: 3px; position: relative; }
.tb-btn { height: 36px; background: #f0f0f0; border: 1px solid; border-color: #fff #777 #777 #fff; box-shadow: inset -1px -1px 0 #aaa; display: flex; align-items: center; justify-content: center; flex: none; }
.tb-start { width: 50px; gap: 1px; font: 700 12px "Liberation Sans", sans-serif; color: #111; }
.tb-app { width: 48px; }
.tb-first { margin-left: 9px; }
.tb-plain { display: flex; align-items: center; justify-content: center; height: 35px; flex: none; }
.tb-w { width: 32px; margin-left: 10px; }
.tb-slide { width: 34px; margin-left: 18px; }
.tb-calc { width: 24px; margin-left: 21px; }
.tb-chrome { margin-left: 12px; }
.tb-x { width: 32px; margin-left: 10px; }
.tb-pressed { width: 48px; height: 36px; margin-left: 10px; background: #fff; border: 1px solid; border-color: #666 #ddd #ddd #666; display: flex; align-items: center; justify-content: center; flex: none; }
.tb-letter { font: 700 15px "Liberation Sans", sans-serif; fill: #fff; }
.tray-left { margin-left: auto; display: flex; align-items: center; }
.lang { font-size: 12px; color: #111; }
.tray-sep { width: 1px; height: 22px; margin: 0 7px 0 4px; background: #bbb; }
.tray-btn { width: 9px; margin-right: 3px; }
.tray { width: 190px; height: 37px; display: flex; align-items: center; border: 1px solid; border-color: #aaa #f0f0f0 #f0f0f0 #aaa; padding-left: 6px; margin-right: 2px; flex: none; }
.ti { width: 16px; height: 16px; margin-right: 8px; }
.clock { display: flex; flex-direction: column; align-items: center; font-size: 11.500px; line-height: 17px; color: #1c2c50; width: 60px; margin-left: 4px; }
.ti-desk { margin: 0 0 0 5px; height: 14px; }

/* context menu */
.ctx { position: absolute; left: 934px; top: 460px; width: 288px; height: 368px; padding: 3px 1px 0; background: #2d2e38; font-size: 13px; color: #f2f2f2; }
.ci { height: 24px; display: flex; justify-content: space-between; align-items: center; padding: 0 12px 0 14px; white-space: nowrap; }
.ks { color: #8b8c92; }
.ci-off { color: #85868c; }
.ci-on { background: #4479f5; }
.ci-on .ks { color: #a4bbf0; }
.csep { height: 1px; margin: 3px 0 2px; background: #44454e; }
.ci-ext { justify-content: flex-start; padding-right: 15px; }
.ci-icon { width: 15px; height: 16px; margin-right: 6px; }
.ci-arrow { margin-left: auto; width: 0; height: 0; border-left: 5px solid #eee; border-top: 4.500px solid transparent; border-bottom: 4.500px solid transparent; }
```
